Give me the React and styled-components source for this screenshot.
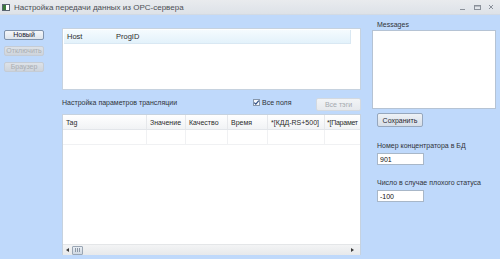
import React from "react";
import styled, { createGlobalStyle } from "styled-components";

const GlobalStyle = createGlobalStyle`
html, body {
  margin: 0;
  padding: 0;
  background: #bfd9fb;
}
* {
  box-sizing: border-box;
}
`;

const columns = [
  { name: "Tag", width: 84 },
  { name: "Значение", width: 39 },
  { name: "Качество", width: 42 },
  { name: "Время", width: 40 },
  { name: "*[КДД-RS+500]", width: 57 },
  { name: "*[Парамет", width: 35, tight: true },
];

const App = () => {
  return (
    <>
      <GlobalStyle />
      <Window>
        <TitleBar>
          <AppIcon>
            <svg width="8" height="7" viewBox="0 0 8 7">
              <rect x="0.5" y="0.5" width="7" height="6" fill="#fff" stroke="#5a6470" />
              <rect x="1" y="1" width="3" height="5" fill="#3c7a3c" />
            </svg>
          </AppIcon>
          <Title>Настройка передачи данных из OPC-сервера</Title>
          <Controls>
            <svg width="40" height="10" viewBox="0 0 40 10">
              <rect x="4" y="7" width="5" height="1" fill="#8a9099" />
              <rect x="18.5" y="3.5" width="6" height="4" fill="none" stroke="#8a9099" />
              <rect x="18.5" y="3.5" width="6" height="1" fill="#8a9099" />
              <path d="M33 3 L37 7 M37 3 L33 7" stroke="#8a9099" strokeWidth="1" />
            </svg>
          </Controls>
        </TitleBar>
        <Body>
          <LeftColumn>
            <Button>Новый</Button>
            <Button disabled>Отключить</Button>
            <Button disabled>Браузер</Button>
          </LeftColumn>

          <MiddleColumn>
            <ListBox>
              <ListHeader>
                <HeaderCell $width={49}>Host</HeaderCell>
                <HeaderCell $width={100}>ProgID</HeaderCell>
              </ListHeader>
            </ListBox>

            <OptionsRow>
              <Label>Настройка параметров трансляции</Label>
              <CheckLabel>
                <CheckBox>
                  <svg width="7" height="7" viewBox="0 0 7 7">
                    <path d="M1.2 3.6 L2.8 5.2 L5.8 1.6" fill="none" stroke="#2a4a80" strokeWidth="1.1" />
                  </svg>
                </CheckBox>
                Все поля
              </CheckLabel>
              <SmallButton disabled>Все тэги</SmallButton>
            </OptionsRow>

            <Table>
              <TableHeader>
                {columns.map((c) => (
                  <TableHeadCell key={c.name} $tight={c.tight} style={{ width: c.width }}>
                    {c.name}
                  </TableHeadCell>
                ))}
              </TableHeader>
              <EmptyRow>
                {columns.map((c) => (
                  <EmptyCell key={c.name} style={{ width: c.width }} />
                ))}
              </EmptyRow>
              <TableFill />
              <ScrollBar>
                <Arrow $dir="left" />
                <Thumb>
                  <Grip />
                </Thumb>
                <ScrollTrack />
                <Arrow $dir="right" />
              </ScrollBar>
            </Table>
          </MiddleColumn>

          <RightColumn>
            <Label>Messages</Label>
            <MessagesBox />
            <SaveButton>Сохранить</SaveButton>
            <Field>
              <Label>Номер концентратора в БД</Label>
              <TextInput defaultValue="901" />
            </Field>
            <Field>
              <Label>Число в случае плохого статуса</Label>
              <TextInput defaultValue="-100" />
            </Field>
          </RightColumn>
        </Body>
      </Window>
    </>
  );
};

const Window = styled.div`
  width: 500px;
  height: 259px;
  display: flex;
  flex-direction: column;
  background: #bfd9fb;
  font-family: "Liberation Sans", Arial, sans-serif;
  font-size: 7.5px;
  color: #2b2b2b;
  overflow: hidden;
`;

const TitleBar = styled.div`
  height: 15px;
  flex: none;
  display: flex;
  align-items: center;
  padding: 0 4px 0 2px;
  background: linear-gradient(#e9ebee, #dde2e8);
  border-bottom: 1px solid #d2dae4;
`;

const AppIcon = styled.div`
  width: 9px;
  height: 8px;
  display: flex;
  align-items: center;
  margin-right: 3px;
`;

const Title = styled.div`
  font-size: 8px;
  color: #4c4f54;
  flex: 1;
  white-space: nowrap;
`;

const Controls = styled.div`
  display: flex;
  align-items: center;
`;

const Body = styled.div`
  flex: 1;
  display: flex;
  padding: 0 4px;
`;

const LeftColumn = styled.div`
  width: 40px;
  display: flex;
  flex-direction: column;
  gap: 6px;
  padding-top: 15px;
  margin-right: 18px;
`;

const Button = styled.button`
  height: 10px;
  width: 40px;
  padding: 0;
  font-family: inherit;
  font-size: 7px;
  color: ${(p) => (p.disabled ? "#a9adb2" : "#1a2230")};
  background: ${(p) =>
    p.disabled
      ? "linear-gradient(#dde2e8, #ced4dc)"
      : "linear-gradient(#f4f6f9, #dde4ec)"};
  border: 1px solid ${(p) => (p.disabled ? "#c5ccd5" : "#7f92ab")};
  border-radius: 2px;
  line-height: 8px;
`;

const MiddleColumn = styled.div`
  width: 299px;
  display: flex;
  flex-direction: column;
  padding-top: 13px;
  margin-right: 11px;
`;

const ListBox = styled.div`
  height: 62px;
  background: #fff;
  border: 1px solid #c6d2df;
  padding: 1px;
`;

const ListHeader = styled.div`
  width: 287px;
  height: 14px;
  display: flex;
  align-items: center;
  background: linear-gradient(#f5fbfe, #e3f2fb);
  border-bottom: 1px solid #d9e8f3;
  border-right: 1px solid #d9e8f3;
`;

const HeaderCell = styled.div`
  width: ${(p) => p.$width}px;
  padding-left: 3px;
  color: #2b2b2b;
`;

const OptionsRow = styled.div`
  height: 24px;
  display: flex;
  align-items: center;
`;

const Label = styled.div`
  font-size: 7px;
  color: #2f3338;
  white-space: nowrap;
`;

const CheckLabel = styled.label`
  display: flex;
  align-items: center;
  gap: 2px;
  margin-left: 76px;
  font-size: 7px;
  color: #2f3338;
`;

const CheckBox = styled.span`
  width: 7px;
  height: 7px;
  display: flex;
  border: 1px solid #8797ab;
  background: #f6f8fb;
  align-items: center;
  justify-content: center;
  svg {
    margin: -1px;
  }
`;

const SmallButton = styled.button`
  margin-left: auto;
  margin-top: 4px;
  width: 45px;
  height: 13px;
  padding: 0;
  font-family: inherit;
  font-size: 7px;
  color: #a4a9af;
  background: linear-gradient(#f2f4f6, #e6e9ed);
  border: 1px solid #d3d9e0;
  border-radius: 2px;
`;

const Table = styled.div`
  height: 141px;
  display: flex;
  flex-direction: column;
  background: #fff;
  border: 1px solid #c6d2df;
  border-bottom: none;
`;

const TableHeader = styled.div`
  height: 15px;
  display: flex;
  background: linear-gradient(#ffffff, #f1f3f5);
  border-bottom: 1px solid #e3e6ea;
  overflow: hidden;
  flex: none;
`;

const TableHeadCell = styled.div`
  flex: none;
  display: flex;
  align-items: center;
  padding-left: ${(p) => (p.$tight ? "2px" : "3px")};
  border-right: 1px solid #e6e8eb;
  white-space: nowrap;
  font-size: 7px;
  letter-spacing: ${(p) => (p.$tight ? "-0.25px" : "0")};
  color: #2b2b2b;
  &:last-child {
    border-right: none;
  }
`;

const EmptyRow = styled.div`
  height: 15px;
  display: flex;
  flex: none;
  border-bottom: 1px solid #f0f1f3;
  overflow: hidden;
`;

const EmptyCell = styled.div`
  flex: none;
  border-right: 1px solid #f0f1f3;
  &:last-child {
    border-right: none;
  }
`;

const TableFill = styled.div`
  flex: 1;
`;

const ScrollBar = styled.div`
  height: 11px;
  flex: none;
  display: flex;
  align-items: center;
  background: linear-gradient(#f3f4f5, #e7e9eb);
  border-top: 1px solid #e4e6e8;
  padding: 0 3px;
`;

const Arrow = styled.div`
  width: 0;
  height: 0;
  border-top: 2.5px solid transparent;
  border-bottom: 2.5px solid transparent;
  margin-right: 3px;
  ${(p) =>
    p.$dir === "left"
      ? "border-right: 3px solid #3a3a3a;"
      : "border-left: 3px solid #3a3a3a;"}
`;

const Thumb = styled.div`
  width: 11px;
  height: 9px;
  border: 1px solid #9aa6b4;
  background: linear-gradient(#e9eef4, #cfd8e2);
  border-radius: 1px;
  display: flex;
  align-items: center;
  justify-content: center;
`;

const Grip = styled.div`
  width: 5px;
  height: 4px;
  border-left: 1px solid #8c98a6;
  border-right: 1px solid #8c98a6;
  background: linear-gradient(90deg, transparent 1.5px, #8c98a6 1.5px, #8c98a6 2.5px, transparent 2.5px);
`;

const ScrollTrack = styled.div`
  flex: 1;
`;

const RightColumn = styled.div`
  flex: 1;
  display: flex;
  flex-direction: column;
  padding-top: 6px;
  ${Label} {
    padding-left: 5px;
  }
`;

const MessagesBox = styled.div`
  height: 79px;
  margin-top: 2px;
  background: #fff;
  border: 1px solid #b5c3d4;
`;

const SaveButton = styled.button`
  margin-top: 4px;
  margin-left: 5px;
  width: 46px;
  height: 14px;
  padding: 0;
  font-family: inherit;
  font-size: 7px;
  color: #1f2630;
  background: linear-gradient(#eef2f6, #d6dee8);
  border: 1px solid #96a7bd;
  border-radius: 2px;
`;

const Field = styled.div`
  display: flex;
  flex-direction: column;
  gap: 4px;
  margin-top: 15px;
  & + & {
    margin-top: 14px;
  }
`;

const TextInput = styled.input`
  margin-left: 5px;
  width: 47px;
  height: 12px;
  padding: 0 2px;
  font-family: inherit;
  font-size: 7px;
  color: #111;
  background: #fff;
  border: 1px solid #a8b7c8;
  outline: none;
`;

export default App;
